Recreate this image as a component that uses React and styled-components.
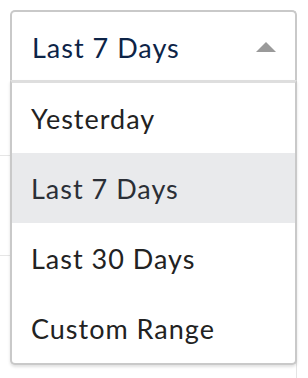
import React from 'react'
import styled, { createGlobalStyle } from 'styled-components';

const GlobalStyle = createGlobalStyle`
html, body {
margin: 0;
padding: 0;
background: #ffffff;
font-family: Lato, "Noto Sans", sans-serif;
}
`;

const options = ['Yesterday', 'Last 7 Days', 'Last 30 Days', 'Custom Range'];

export default function App() {
    const selected = 'Last 7 Days';
    return (
        <Page>
            <GlobalStyle />
            <SelectWrap>
                <SelectHeader>
                    <SelectedText>{selected}</SelectedText>
                    <Caret />
                </SelectHeader>
                <Menu>
                    {options.map((o) => (
                        <MenuItem key={o} active={o === selected}>{o}</MenuItem>
                    ))}
                </Menu>
            </SelectWrap>
            <Backdrop>
                <BackRow height={76} />
                <BackRow height={100} />
                <BackRow height={140} />
            </Backdrop>
        </Page>
    )
}

const Page = styled.div`
width: 308px;
height: 378px;
overflow: hidden;
padding-top: 10px;
box-sizing: border-box;
`;

const SelectWrap = styled.div`
position: relative;
margin-left: 10px;
width: 287px;
z-index: 2;
`;

const SelectHeader = styled.div`
display: flex;
align-items: center;
justify-content: space-between;
height: 70px;
box-sizing: border-box;
padding: 0 19px 0 20px;
border: 2px solid #c9c9c9;
border-bottom: none;
border-radius: 5px 5px 0 0;
background: #ffffff;
`;

const SelectedText = styled.span`
font-size: 27px;
letter-spacing: 1px;
color: #0d2447;
padding-top: 2px;
`;

const Caret = styled.span`
width: 0;
height: 0;
border-left: 10px solid transparent;
border-right: 10px solid transparent;
border-bottom: 10px solid #9a9a9a;
margin-top: 2px;
`;

const Menu = styled.div`
position: absolute;
top: 70px;
left: 0;
right: 0;
box-sizing: border-box;
border: 2px solid #c9c9c9;
border-top: 3px solid #dedede;
border-radius: 0 0 5px 5px;
background: #ffffff;
box-shadow: 0 2px 3px rgba(0, 0, 0, 0.12);
overflow: hidden;
`;

const MenuItem = styled.div`
height: 70px;
display: flex;
align-items: center;
padding-left: 19px;
font-size: 27px;
letter-spacing: 1px;
color: ${(p) => (p.active ? '#2b2f36' : '#222222')};
background: ${(p) => (p.active ? '#e9eaec' : 'transparent')};
`;

const Backdrop = styled.div`
width: 297px;
border-right: 1px solid #e4e4e4;
box-sizing: border-box;
`;

const BackRow = styled.div`
height: ${(p) => p.height}px;
border-bottom: 1px solid #e6e6e6;
box-sizing: border-box;
`;
